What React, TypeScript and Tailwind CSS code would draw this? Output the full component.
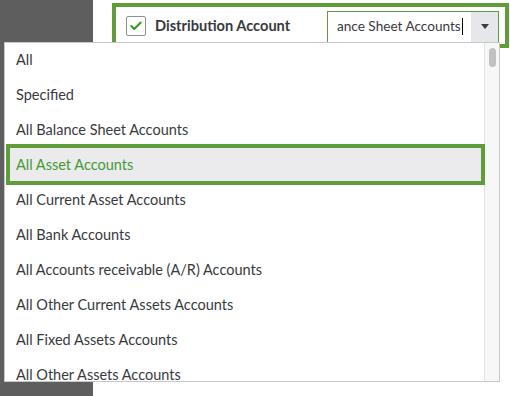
import { Check } from "lucide-react";

const items = [
  "All",
  "Specified",
  "All Balance Sheet Accounts",
  "All Asset Accounts",
  "All Current Asset Accounts",
  "All Bank Accounts",
  "All Accounts receivable (A/R) Accounts",
  "All Other Current Assets Accounts",
  "All Fixed Assets Accounts",
  "All Other Assets Accounts",
];

export default function App() {
  return (
    <div className="relative w-[510px] h-[396px] flex bg-white overflow-hidden font-['Lato',sans-serif] text-[#393a3d]">
      {/* backdrop on the left */}
      <div className="w-[93px] h-full bg-[#5e5e5e] shrink-0" />

      {/* filter row */}
      <div className="flex-1 pt-[3px] pl-[19px]">
        <div className="w-[397px] h-[45px] border-4 border-[#5f9c3a] flex items-center pl-[10px] pr-[6px]">
          <div className="w-[20px] h-[20px] border border-[#8d9096] rounded-[2px] bg-white flex items-center justify-center">
            <Check className="w-[14px] h-[14px] text-[#2ca01c]" strokeWidth={3.5} />
          </div>
          <span className="ml-[9px] text-[14.6px] font-bold">Distribution Account</span>
          <div className="ml-auto mt-[2px] w-[172px] h-[32px] border border-[#5f9c3a] flex bg-white">
            <div className="flex-1 flex items-center pl-[9px] text-[13.6px] overflow-hidden whitespace-nowrap">
              ance Sheet Accounts
              <span className="ml-[1px] w-px h-[17px] bg-black" />
            </div>
            <div className="w-[27px] bg-[#e6e7ea] flex items-center justify-center">
              <div className="w-0 h-0 border-l-[4px] border-r-[4px] border-t-[5px] border-l-transparent border-r-transparent border-t-[#393a3d]" />
            </div>
          </div>
        </div>
      </div>

      {/* dropdown list */}
      <div className="absolute left-[4px] top-[42px] w-[496px] h-[340px] bg-white border border-[#c8c8c8] flex">
        <div className="flex-1 pl-[1px]">
          {items.map((item, i) => (
            <div key={item} className="relative">
              <div
                className={
                  i === 3
                    ? "h-[35px] flex items-center pl-[10px] pb-[1px] text-[14.5px] bg-[#ebebee] text-[#439a35]"
                    : "h-[35px] flex items-center pl-[10px] pb-[1px] text-[14.5px]"
                }
              >
                {item}
              </div>
              {i === 3 && (
                <div className="absolute left-0 right-[-1px] -top-[4px] -bottom-[2px] border-4 border-[#5f9c3a]" />
              )}
            </div>
          ))}
        </div>
        <div className="w-[15px] bg-[#f7f7f7] border-l border-[#e3e3e3] pt-[5px] flex justify-center">
          <div className="w-[7px] h-[19px] rounded-full bg-[#c1c1c1]" />
        </div>
      </div>
    </div>
  );
}
